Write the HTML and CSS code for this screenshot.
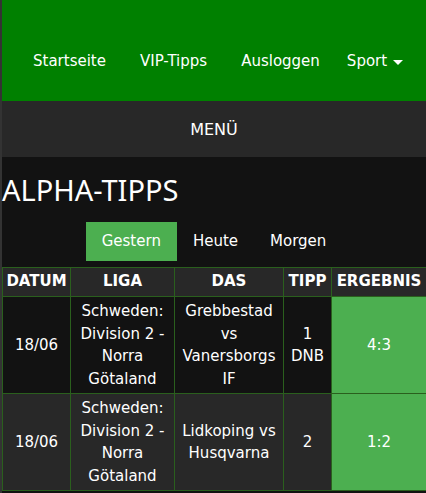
FILE: index.html
```html
<!DOCTYPE html>
<html lang="de">
<head>
<meta charset="utf-8">
<title>Alpha-Tipps</title>
<link rel="stylesheet" href="styles.css">
</head>
<body>
<div class="page">
  <header class="topbar">
    <nav class="nav">
      <a class="nav-link" href="#">Startseite</a>
      <a class="nav-link" href="#">VIP-Tipps</a>
      <a class="nav-link" href="#">Ausloggen</a>
      <a class="nav-link nav-drop" href="#">Sport<span class="caret"></span></a>
    </nav>
  </header>
  <div class="menubar">MENÜ</div>
  <main class="content">
    <h1 class="title">ALPHA-TIPPS</h1>
    <div class="tabs">
      <a class="tab active" href="#">Gestern</a>
      <a class="tab" href="#">Heute</a>
      <a class="tab" href="#">Morgen</a>
    </div>
    <table class="tips">
      <colgroup>
        <col class="c-date">
        <col class="c-league">
        <col class="c-match">
        <col class="c-tip">
        <col class="c-result">
      </colgroup>
      <thead>
        <tr>
          <th>DATUM</th>
          <th>LIGA</th>
          <th>DAS</th>
          <th>TIPP</th>
          <th>ERGEBNIS</th>
        </tr>
      </thead>
      <tbody>
        <tr class="row-dark">
          <td>18/06</td>
          <td>Schweden: Division 2 - Norra Götaland</td>
          <td>Grebbestad vs Vanersborgs IF</td>
          <td>1 DNB</td>
          <td class="result">4:3</td>
        </tr>
        <tr class="row-light">
          <td>18/06</td>
          <td>Schweden: Division 2 - Norra Götaland</td>
          <td>Lidkoping vs Husqvarna</td>
          <td>2</td>
          <td class="result">1:2</td>
        </tr>
      </tbody>
    </table>
  </main>
</div>
</body>
</html>
```

FILE: styles.css
```css
html, body {
  margin: 0;
  padding: 0;
  background: #121212;
}

body {
  font-family: "DejaVu Sans", Verdana, sans-serif;
  color: #fff;
}

.page {
  min-height: 100vh;
  border-left: 2px solid #333;
  background: #121212;
}

/* top navigation */
.topbar {
  background: #008000;
  height: 101px;
  box-sizing: border-box;
  padding-top: 41px;
}

.nav {
  display: flex;
  padding-left: 15px;
}

.nav-link {
  color: #fff;
  text-decoration: none;
  font-size: 15px;
  line-height: 41px;
  padding: 0 16px;
}

.nav-link + .nav-link {
  margin-left: 2px;
}

.nav-link.nav-drop {
  display: flex;
  align-items: center;
  margin-left: 0;
  padding-left: 11px;
}

.caret {
  display: inline-block;
  width: 0;
  height: 0;
  margin-left: 6px;
  margin-top: 1px;
  border-left: 5px solid transparent;
  border-right: 5px solid transparent;
  border-top: 5px solid #fff;
}

/* menu toggle bar */
.menubar {
  background: #282828;
  height: 56px;
  display: flex;
  align-items: center;
  justify-content: center;
  font-size: 16px;
}

/* main content */
.content {
  padding-top: 13px;
}

.title {
  margin: 0;
  font-family: "Noto Sans", "Open Sans", sans-serif;
  font-weight: 400;
  font-size: 29px;
  line-height: 39px;
}

.tabs {
  display: flex;
  justify-content: center;
  margin-top: 13px;
  margin-bottom: 6px;
}

.tab {
  color: #fff;
  text-decoration: none;
  font-size: 15px;
  line-height: 39px;
  padding: 0 16px;
}

.tab.active {
  background: #4caf50;
}

/* tips table */
.tips {
  border-collapse: collapse;
  table-layout: fixed;
  width: 424px;
  font-size: 15px;
  line-height: 22.5px;
  text-align: center;
}

.c-date { width: 68px; }
.c-league { width: 104px; }
.c-match { width: 109px; }
.c-tip { width: 48px; }
.c-result { width: 95px; }

.tips th,
.tips td {
  border: 1px solid #2a5f1d;
  padding: 3px 2px;
}

.tips th {
  background: #282828;
  font-size: 15px;
  font-weight: 700;
  line-height: 21px;
  padding: 3px 0 4px;
}

.row-dark td {
  background: #121212;
}

.row-light td {
  background: #282828;
}

.tips td.result {
  background: #4caf50;
}
```
